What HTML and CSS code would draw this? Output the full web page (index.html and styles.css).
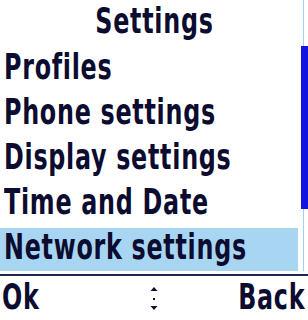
FILE: index.html
```html
<!DOCTYPE html>
<html>
<head>
<meta charset="utf-8">
<link rel="stylesheet" href="styles.css">
</head>
<body>
<div class="screen">
  <div class="main">
    <div class="content">
      <div class="title"><span class="txt center">Settings</span></div>
      <ul class="menu">
        <li class="item"><span class="txt">Profiles</span></li>
        <li class="item"><span class="txt">Phone settings</span></li>
        <li class="item"><span class="txt">Display settings</span></li>
        <li class="item"><span class="txt">Time and Date</span></li>
        <li class="item selected"><span class="txt">Network settings</span></li>
      </ul>
    </div>
    <div class="scrollbar"><div class="thumb"></div></div>
  </div>
  <div class="separator"></div>
  <div class="softkeys">
    <span class="key"><span class="txt">Ok</span></span>
    <svg class="arrows" width="8" height="26" viewBox="0 0 8 26">
      <polygon points="4,0 7.5,4 0.5,4" fill="#101030"/>
      <rect x="3" y="11" width="2" height="2" fill="#101030"/>
      <polygon points="0.5,19 7.5,19 4,23" fill="#101030"/>
    </svg>
    <span class="key right"><span class="txt">Back</span></span>
  </div>
</div>
</body>
</html>
```
FILE: styles.css
```css
html, body {
  margin: 0;
  padding: 0;
  background: #ffffff;
}
.screen {
  width: 308px;
  height: 320px;
  overflow: hidden;
  font-family: "DejaVu Sans Condensed", "DejaVu Sans", sans-serif;
  font-weight: bold;
  font-size: 36px;
  color: #0c0c30;
  display: flex;
  flex-direction: column;
}
.txt {
  display: inline-block;
  white-space: nowrap;
  transform: scaleX(0.735);
  transform-origin: left center;
  letter-spacing: 1px;
}
.txt.center {
  transform-origin: center center;
}
.main {
  display: flex;
  height: 271px;
}
.content {
  width: 298px;
  display: flex;
  flex-direction: column;
}
.title {
  height: 46px;
  line-height: 41px;
  padding-left: 10px;
  text-align: center;
}
.menu {
  list-style: none;
  margin: 0;
  padding: 0;
}
.item {
  height: 41px;
  line-height: 41px;
  padding: 0 0 4px 4px;
  white-space: nowrap;
}
.selected {
  background: linear-gradient(to bottom, transparent 2px, #a8d6f2 2px);
}
.scrollbar {
  width: 10px;
  background: linear-gradient(to right, transparent 5px, #a2d0ee 5px, #a2d0ee 6px, transparent 6px);
  display: flex;
  flex-direction: column;
}
.thumb {
  margin-top: 46px;
  margin-left: 3px;
  width: 7px;
  height: 163px;
  background: #1414e0;
}
.separator {
  margin-top: 3px;
  height: 2px;
  background: #1c2a52;
}
.softkeys {
  display: grid;
  grid-template-columns: 1fr auto 1fr;
  align-items: start;
  padding: 0 3px 0 2px;
  height: 44px;
}
.key {
  line-height: 41px;
  display: flex;
}
.key.right {
  justify-content: flex-end;
}
.key.right .txt {
  transform-origin: right center;
}
.arrows {
  margin-top: 11px;
}
```
